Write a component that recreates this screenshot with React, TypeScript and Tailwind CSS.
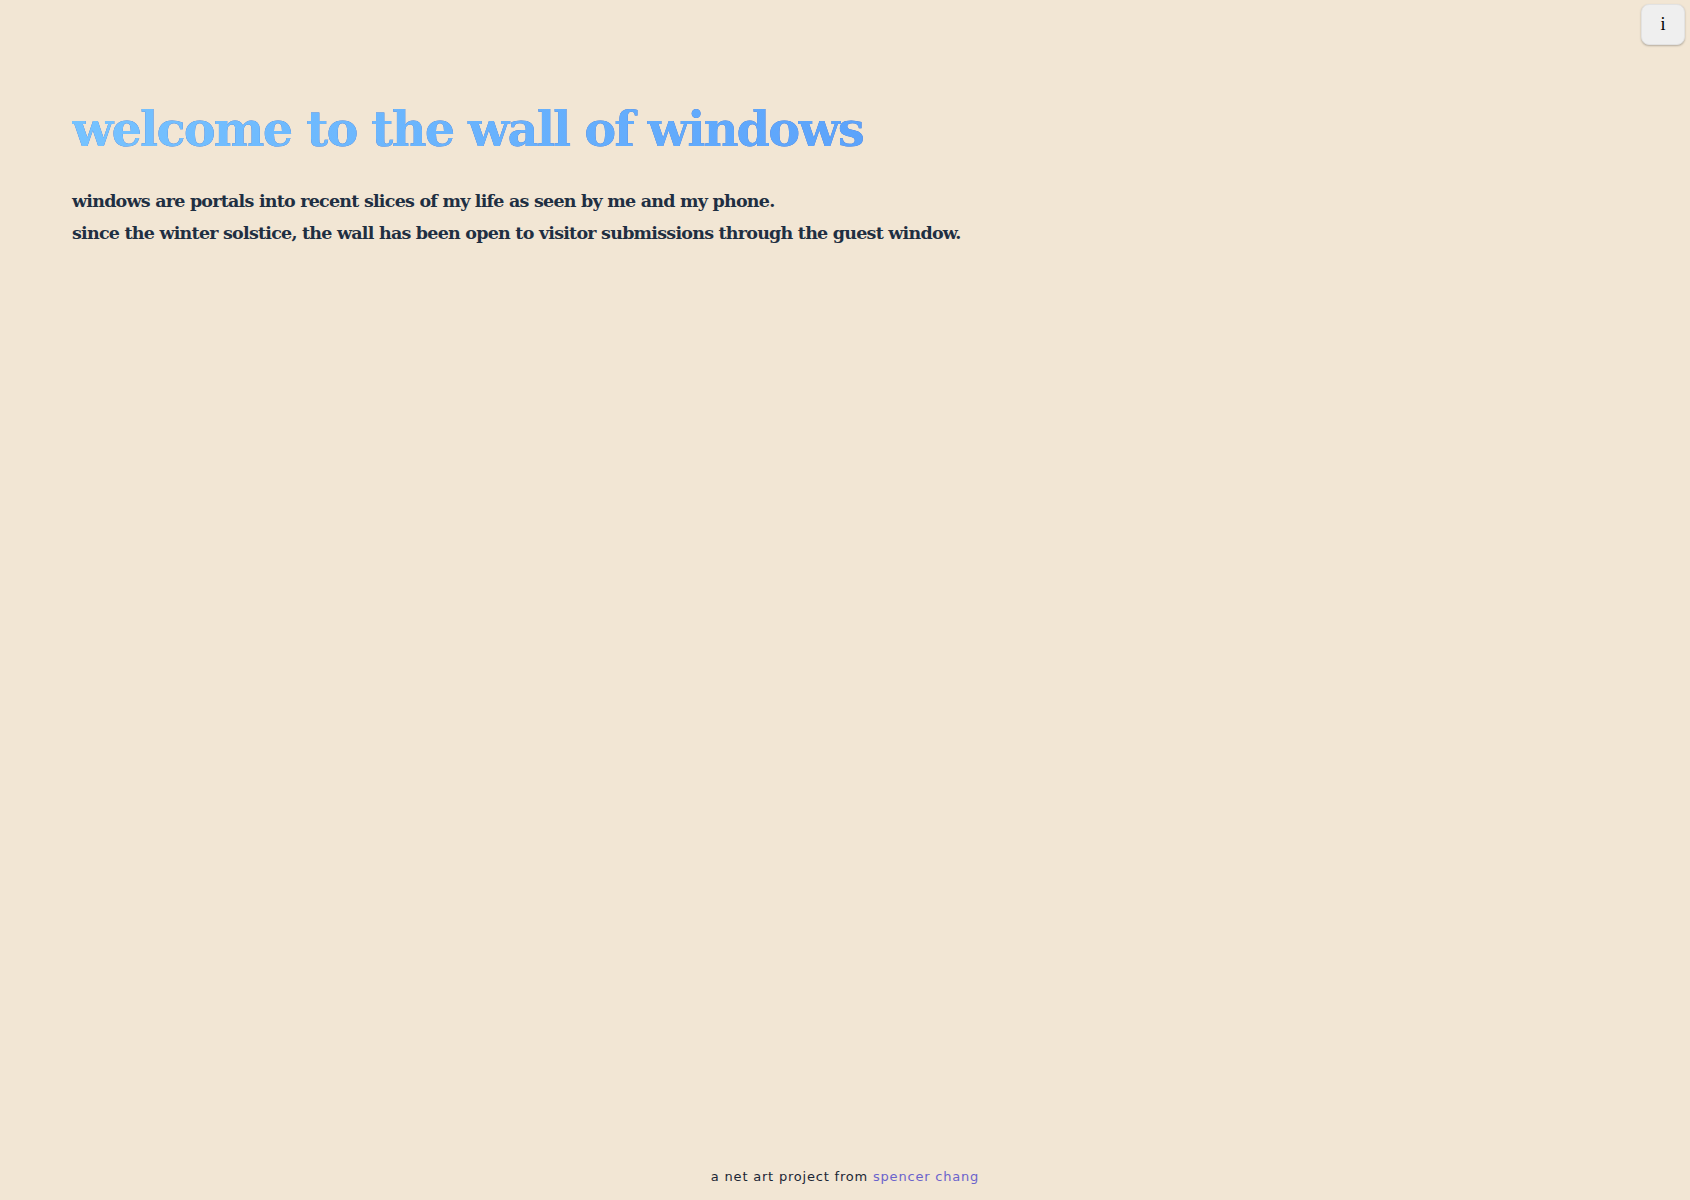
export default function App() {
  return (
    <div className="min-h-screen w-full bg-[#f2e6d4] flex flex-col relative">
      <button className="absolute top-[4px] right-[5px] w-[44px] h-[41px] rounded-[8px] bg-[#efefef] border border-[#e2e2e2] shadow-[0_1px_2px_rgba(0,0,0,0.25)] flex items-center justify-center text-[18px] text-black font-['Liberation_Serif',serif]">
        i
      </button>

      <main className="flex-1 px-[72px] pt-[97px]">
        <h1 className="text-[48px] leading-[64px] font-bold font-['DejaVu_Serif',serif] tracking-[-1.9px] bg-gradient-to-r from-[#76c3ff] via-[#5da4fb] to-[#4785f2] bg-clip-text text-transparent drop-shadow-[0_0_0.5px_#3560c8]">
          welcome to the wall of windows
        </h1>
        <div className="mt-[24px] text-[17.5px] leading-[32px] font-bold text-[#1f2f42] font-['DejaVu_Serif',serif] tracking-[-0.77px]">
          <p>windows are portals into recent slices of my life as seen by me and my phone.</p>
          <p>since the winter solstice, the wall has been open to visitor submissions through the guest window.</p>
        </div>
      </main>

      <footer className="pb-[14px] text-center text-[13px] tracking-[0.8px] font-['DejaVu_Sans',sans-serif] text-[#1b2635]">
        a net art project from{' '}
        <a href="#" className="text-[#6b63cc]">
          spencer chang
        </a>
      </footer>
    </div>
  );
}
